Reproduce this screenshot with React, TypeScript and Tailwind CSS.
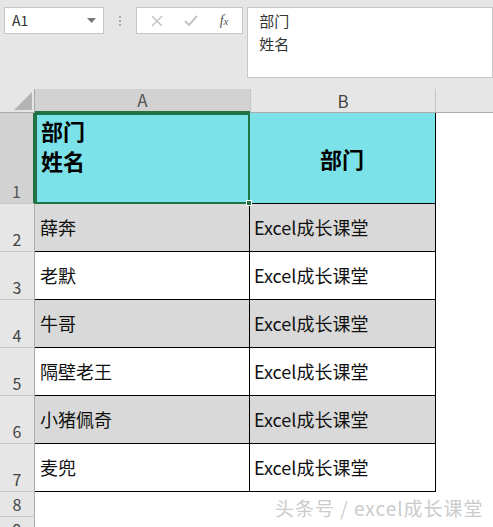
const rows = [
  { n: 2, name: "薛奔", alt: true },
  { n: 3, name: "老默", alt: false },
  { n: 4, name: "牛哥", alt: true },
  { n: 5, name: "隔壁老王", alt: false },
  { n: 6, name: "小猪佩奇", alt: true },
  { n: 7, name: "麦兜", alt: false },
];

const font = "font-['Microsoft_YaHei','Noto_Sans_CJK_SC',sans-serif]";

export default function App() {
  return (
    <div className={`w-[493px] h-[527px] overflow-hidden bg-white ${font}`}>
      {/* toolbar */}
      <div className="h-[89px] bg-[#e6e6e6] flex items-start pt-[7px]">
        <div className="ml-[4px] w-[101px] h-[27px] bg-white border border-[#c6c6c6] flex items-center justify-between pl-[7px] pr-[7px]">
          <span className="text-[14px] text-[#333]">A1</span>
          <svg width="9" height="5" viewBox="0 0 9 5"><path d="M0 0h9L4.5 5z" fill="#777" /></svg>
        </div>
        <div className="w-[33px] h-[27px] flex flex-col items-center justify-center gap-[2px]">
          <div className="w-[2px] h-[2px] bg-[#aaa]" />
          <div className="w-[2px] h-[2px] bg-[#aaa]" />
          <div className="w-[2px] h-[2px] bg-[#aaa]" />
        </div>
        <div className="w-[109px] h-[27px] bg-white border border-[#c6c6c6] flex items-center justify-around px-[3px]">
          <svg width="12" height="12" viewBox="0 0 12 12"><path d="M1 1l10 10M11 1L1 11" stroke="#c4c4c4" strokeWidth="1.5" /></svg>
          <svg width="14" height="12" viewBox="0 0 14 12"><path d="M1 6l4 4 8-9" stroke="#c4c4c4" strokeWidth="2" fill="none" /></svg>
          <span className="font-['Liberation_Serif',serif] italic text-[14px] text-[#555]">f<span className="text-[11px]">x</span></span>
        </div>
        <div className="ml-[4px] w-[250px] h-[71px] bg-white border border-[#c6c6c6] pl-[11px] pt-[1px] text-[15px] leading-[23px] text-[#333]">
          <div>部门</div>
          <div>姓名</div>
        </div>
      </div>

      {/* column header */}
      <div className="flex h-[24px] bg-[#e6e6e6] border-b border-[#ababab]">
        <div className="w-[35px] relative border-r border-[#ababab]">
          <svg className="absolute right-[2px] bottom-[2px]" width="18" height="18" viewBox="0 0 18 18"><path d="M18 0v18H0z" fill="#b4b4b4" /></svg>
        </div>
        <div className="w-[215px] bg-[#d2d2d2] border-b-2 border-[#217346] -mb-[1px] flex items-center justify-center text-[17px] text-[#555]">A</div>
        <div className="w-[186px] border-l border-[#c6c6c6] border-r flex items-center justify-center text-[17px] text-[#444]">B</div>
        <div className="flex-1" />
      </div>

      {/* row 1 */}
      <div className="flex h-[91px]">
        <div className="w-[35px] bg-[#d2d2d2] border-r-2 border-[#217346] border-b border-b-[#c6c6c6] flex items-end justify-center text-[16px] text-[#555]">1</div>
        <div className="w-[215px] bg-[#7ae2e8] border-2 border-[#217346] -mr-[1px] relative z-10 pl-[4px] text-[22px] leading-[30px] font-bold text-black">
          <div>部门</div>
          <div>姓名</div>
          <div className="absolute -right-[4px] -bottom-[4px] w-[6px] h-[6px] bg-[#217346] border border-white" />
        </div>
        <div className="w-[187px] bg-[#7ae2e8] border-r border-b border-black flex items-center justify-center text-[22px] font-bold text-black">部门</div>
        <div className="flex-1" />
      </div>

      {rows.map((r) => (
        <div key={r.n} className="flex h-[48px]">
          <div className="w-[35px] bg-[#e6e6e6] border-r border-[#ababab] border-b border-b-[#c6c6c6] flex items-end justify-center text-[16px] text-[#444]">{r.n}</div>
          <div className={`w-[215px] ${r.alt ? "bg-[#d9d9d9]" : "bg-white"} border-r border-b border-black flex items-center pl-[5px] text-[18px] text-[#111]`}>{r.name}</div>
          <div className={`w-[186px] ${r.alt ? "bg-[#d9d9d9]" : "bg-white"} border-r border-b border-black flex items-center pl-[4px] text-[18px] text-[#111]`}>Excel成长课堂</div>
          <div className="flex-1" />
        </div>
      ))}

      <div className="flex h-[25px]">
        <div className="w-[35px] bg-[#e6e6e6] border-r border-[#ababab] border-b border-b-[#c6c6c6] flex items-end justify-center text-[16px] text-[#444]">8</div>
        <div className="flex-1 flex items-start pl-[240px] pt-[2px] text-[19px] tracking-[1px] text-[#cbcbcb] whitespace-nowrap">头条号 / excel成长课堂</div>
      </div>
      <div className="flex h-[25px]">
        <div className="w-[35px] bg-[#e6e6e6] border-r border-[#ababab] flex items-start justify-center text-[16px] text-[#444]">9</div>
      </div>
    </div>
  );
}
